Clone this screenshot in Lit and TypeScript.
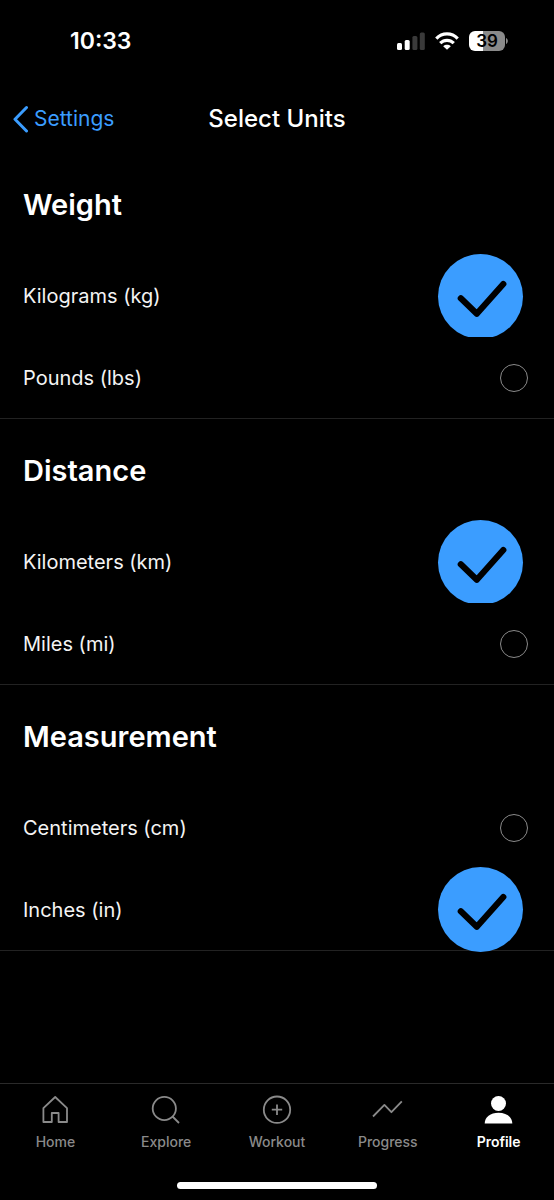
import { LitElement, html, css, svg } from "lit";
import { customElement, property, state } from "lit/decorators.js";

interface UnitOption {
  id: string;
  label: string;
}

interface UnitGroup {
  id: string;
  title: string;
  options: UnitOption[];
}

const GROUPS: UnitGroup[] = [
  {
    id: "weight",
    title: "Weight",
    options: [
      { id: "kg", label: "Kilograms (kg)" },
      { id: "lbs", label: "Pounds (lbs)" },
    ],
  },
  {
    id: "distance",
    title: "Distance",
    options: [
      { id: "km", label: "Kilometers (km)" },
      { id: "mi", label: "Miles (mi)" },
    ],
  },
  {
    id: "measurement",
    title: "Measurement",
    options: [
      { id: "cm", label: "Centimeters (cm)" },
      { id: "in", label: "Inches (in)" },
    ],
  },
];

const TABS = [
  {
    label: "Home",
    icon: svg`<path d="M4.4 13.2 L16.2 2 L28 13.2 V27 H19.6 V18 H12.8 V27 H4.4 Z" />`,
  },
  {
    label: "Explore",
    icon: svg`<circle cx="14.3" cy="13.5" r="11.6" /><path d="M22.5 21.5 L29 28" />`,
  },
  {
    label: "Workout",
    icon: svg`<circle cx="16" cy="14.7" r="13.2" /><path d="M16 9.5 V19.9 M10.8 14.7 H21.2" />`,
  },
  {
    label: "Progress",
    icon: svg`<path d="M1 21.5 L12.4 9.9 L19.4 17.2 L29.8 6.4" />`,
  },
  {
    label: "Profile",
    icon: svg`<circle class="solid" cx="15.5" cy="8.5" r="7.5" /><path class="solid" d="M1.7 28.6 C1.7 22 7.5 17.8 15.5 17.8 S29.3 22 29.3 28.6 Z" />`,
  },
];

@customElement("status-bar")
class StatusBar extends LitElement {
  static styles = css`
    :host {
      display: flex;
      align-items: center;
      justify-content: space-between;
      height: 84px;
      padding: 0 46px 2px 70px;
      box-sizing: border-box;
      color: #fff;
    }
    .time {
      font-size: 23px;
      line-height: 28px;
      font-weight: 600;
    }
    .indicators {
      display: flex;
      align-items: center;
      gap: 10px;
    }
    .battery {
      display: flex;
      align-items: center;
      gap: 1px;
    }
    .level {
      width: 36px;
      height: 20px;
      border-radius: 6px;
      background: linear-gradient(to right, #fff 39%, #8a8a8a 39%);
      color: #000;
      font-size: 17px;
      line-height: 20px;
      font-weight: 600;
      text-align: center;
    }
  `;

  render() {
    return html`
      <span class="time">10:33</span>
      <div class="indicators">
        <svg width="28" height="20" viewBox="0 0 28 20" aria-hidden="true">
          <rect x="0" y="12" width="5" height="7" rx="1.5" fill="#fff" />
          <rect x="7.7" y="9" width="5" height="10" rx="1.5" fill="#fff" />
          <rect x="15.4" y="5" width="5" height="14" rx="1.5" fill="#3a3a3a" />
          <rect x="22.8" y="1.5" width="5" height="17.5" rx="1.5" fill="#3a3a3a" />
        </svg>
        <svg width="24" height="20" viewBox="0 0 24 20" fill="none" stroke="#fff" stroke-width="3.2" aria-hidden="true">
          <path d="M1.3 7.6 C7.2 1.4 16.8 1.4 22.7 7.6" />
          <path d="M5.2 12.2 C9.2 8.3 14.8 8.3 18.8 12.2" />
          <path d="M12 18.8 L8.2 15.2 C10.4 13.3 13.6 13.3 15.8 15.2 Z" fill="#fff" stroke="none" />
        </svg>
        <div class="battery">
          <span class="level">39</span>
          <svg width="2" height="6" viewBox="0 0 2 6" aria-hidden="true">
            <path d="M0 0 C2.4 1 2.4 5 0 6 Z" fill="#8a8a8a" />
          </svg>
        </div>
      </div>
    `;
  }
}

@customElement("unit-group")
class UnitGroupElement extends LitElement {
  @property({ attribute: false }) group!: UnitGroup;
  @property() selected = "";

  static styles = css`
    :host {
      display: block;
    }
    .group {
      margin: 0;
      padding: 0;
      border: 0;
      border-bottom: 1px solid #222;
      min-width: 0;
    }
    .title {
      margin: 0;
      padding: 34px 23px 32px;
      font-size: 29px;
      line-height: 36px;
      font-weight: 600;
      color: #fff;
    }
    /* Rows stack in order, so each one trims a badge that hangs out of the row above. */
    .row {
      position: relative;
      display: flex;
      align-items: center;
      justify-content: space-between;
      height: 82px;
      padding: 0 26px 0 23px;
      box-sizing: border-box;
      background: #000;
      color: #f4f4f4;
      font-size: 20px;
      line-height: 26px;
      cursor: pointer;
    }
    .row:last-child {
      height: 81px;
    }
    .row.on {
      padding-right: 31px;
    }
    .control {
      display: grid;
      place-items: center;
      flex: none;
    }
    .control > * {
      grid-area: 1 / 1;
    }
    .radio {
      appearance: none;
      box-sizing: border-box;
      width: 28px;
      height: 28px;
      margin: 0;
      border: 1px solid #8a8a8a;
      border-radius: 50%;
      cursor: pointer;
    }
    .on .radio {
      width: 85px;
      height: 85px;
      border: 0;
      background: #3b9dff;
    }
    .check {
      pointer-events: none;
      z-index: 1;
    }
  `;

  private pick(id: string) {
    this.dispatchEvent(new CustomEvent("unit-change", { detail: id }));
  }

  render() {
    const { id, title, options } = this.group;
    return html`
      <fieldset class="group" aria-labelledby="title">
        <h2 class="title" id="title">${title}</h2>
        ${options.map((o) => {
          const on = o.id === this.selected;
          return html`
            <label class="row ${on ? "on" : ""}">
              <span>${o.label}</span>
              <span class="control">
                <input
                  class="radio"
                  type="radio"
                  name=${id}
                  .value=${o.id}
                  .checked=${on}
                  @change=${() => this.pick(o.id)}
                />
                ${on
                  ? html`<svg class="check" width="85" height="85" viewBox="0 0 85 85" fill="none" aria-hidden="true">
                      <path d="M22.8 44.3 L38.8 59.8 L65.3 30" stroke="#000" stroke-width="6.2" stroke-linecap="round" stroke-linejoin="round" />
                    </svg>`
                  : ""}
              </span>
            </label>
          `;
        })}
      </fieldset>
    `;
  }
}

@customElement("tab-bar")
class TabBar extends LitElement {
  @property() current = "";

  static styles = css`
    :host {
      display: block;
      border-top: 1px solid #2a2a2a;
    }
    .tabs {
      display: grid;
      grid-template-columns: repeat(5, 1fr);
      padding-top: 11px;
    }
    .tab {
      display: flex;
      flex-direction: column;
      align-items: center;
      gap: 7px;
      color: #8a8a8a;
      font-size: 14px;
      line-height: 20px;
      font-weight: 500;
      text-decoration: none;
    }
    .tab.current {
      color: #fff;
      font-weight: 600;
    }
    .icon {
      fill: none;
      stroke: currentColor;
      stroke-width: 1.8;
      stroke-linejoin: round;
    }
    .solid {
      fill: currentColor;
      stroke: none;
    }
    .home-indicator {
      width: 36%;
      height: 7px;
      margin: 30px auto 11px;
      border-radius: 4px;
      background: #fff;
    }
  `;

  render() {
    return html`
      <nav class="tabs" aria-label="Main">
        ${TABS.map(
          (t) => html`
            <a class="tab ${t.label === this.current ? "current" : ""}" href="#${t.label.toLowerCase()}">
              <svg class="icon" width="32" height="30" viewBox="0 0 32 30" aria-hidden="true">${t.icon}</svg>
              <span>${t.label}</span>
            </a>
          `
        )}
      </nav>
      <div class="home-indicator"></div>
    `;
  }
}

@customElement("app-root")
class AppRoot extends LitElement {
  @state() private selection: Record<string, string> = {
    weight: "kg",
    distance: "km",
    measurement: "in",
  };

  static styles = css`
    :host {
      display: flex;
      flex-direction: column;
      min-height: 100vh;
      background: #000;
      color: #fff;
      font-family: Inter, "Liberation Sans", sans-serif;
    }
    .header {
      display: grid;
      grid-template-columns: 1fr auto 1fr;
      align-items: center;
      height: 69px;
      padding: 0 12px;
    }
    .back {
      display: flex;
      align-items: center;
      gap: 6px;
      color: #3b9dff;
      font-size: 21px;
      line-height: 28px;
      text-decoration: none;
    }
    .title {
      margin: 0;
      font-size: 24px;
      line-height: 28px;
      font-weight: 500;
    }
    .content {
      flex: 1;
    }
  `;

  render() {
    return html`
      <status-bar></status-bar>
      <header class="header">
        <a class="back" href="#settings">
          <svg width="16" height="28" viewBox="0 0 16 28" fill="none" aria-hidden="true">
            <path d="M14.5 2.5 L3 14.3 L14.5 26" stroke="currentColor" stroke-width="3" stroke-linecap="round" stroke-linejoin="round" />
          </svg>
          <span>Settings</span>
        </a>
        <h1 class="title">Select Units</h1>
      </header>
      <main class="content">
        ${GROUPS.map(
          (g) => html`
            <unit-group
              .group=${g}
              .selected=${this.selection[g.id]}
              @unit-change=${(e: CustomEvent<string>) =>
                (this.selection = { ...this.selection, [g.id]: e.detail })}
            ></unit-group>
          `
        )}
      </main>
      <tab-bar current="Profile"></tab-bar>
    `;
  }
}
